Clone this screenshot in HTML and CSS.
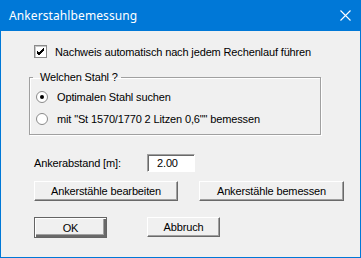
FILE: index.html
```html
<!DOCTYPE html>
<html lang="de">
<head>
    <meta charset="UTF-8">
    <title>Ankerstahlbemessung</title>
    <link rel="stylesheet" href="styles.css">
</head>
<body>
    <div class="window">
        <div class="titlebar">
            <span class="title">Ankerstahlbemessung</span>
            <svg class="close" width="11" height="11" viewBox="0 0 11 11">
                <path d="M0.5 0.5 L10.5 10.5 M10.5 0.5 L0.5 10.5" stroke="#fff" stroke-width="1.1" fill="none"/>
            </svg>
        </div>
        <div class="content">
            <label class="check-row">
                <span class="checkbox">
                    <svg width="9" height="9" viewBox="0 0 9 9">
                        <path d="M1 4 L3 6 L8 1 M1 5 L3 7 L8 2 M1 6 L3 8 L8 3" stroke="#000" stroke-width="1" fill="none"/>
                    </svg>
                </span>
                Nachweis automatisch nach jedem Rechenlauf führen
            </label>
            <fieldset class="group">
                <legend>Welchen Stahl ?</legend>
                <label class="radio-row"><span class="radio checked"></span>Optimalen Stahl suchen</label>
                <label class="radio-row"><span class="radio"></span>mit "St 1570/1770 2 Litzen 0,6"" bemessen</label>
            </fieldset>
            <div class="field-row">
                <span class="field-label">Ankerabstand [m]:</span>
                <span class="textbox">2.00</span>
            </div>
            <div class="button-row">
                <button class="btn wide">Ankerstähle bearbeiten</button>
                <button class="btn wide right">Ankerstähle bemessen</button>
            </div>
            <div class="button-row last">
                <button class="btn small default">OK</button>
                <button class="btn small abort">Abbruch</button>
            </div>
        </div>
    </div>
</body>
</html>
```

FILE: styles.css
```css
body {
    margin: 0;
    font-family: "Liberation Sans", Arial, sans-serif;
    font-size: 11px;
    letter-spacing: -0.14px;
    color: #000;
}
.window {
    width: 361px;
    height: 258px;
    box-sizing: border-box;
    background-color: #f0f0f0;
    border: 1px solid #0078d7;
    border-top: none;
}
.titlebar {
    height: 31px;
    margin: 0 -1px;
    background-color: #0078d7;
    display: flex;
    align-items: center;
    justify-content: space-between;
    padding: 0 10px 0 9px;
}
.title {
    color: #fff;
    font-family: "Noto Sans", sans-serif;
    font-size: 12px;
    letter-spacing: 0.1px;
    margin-top: -1px;
}
.close {
    display: block;
}
.content {
    padding-left: 33px;
}
.check-row {
    display: flex;
    align-items: center;
    height: 13px;
    margin-top: 14px;
}
.checkbox {
    width: 11px;
    height: 11px;
    border: 1px solid #8a8a8a;
    box-shadow: inset 1px 1px 0 #c8c8c8;
    background-color: #fff;
    margin-right: 8px;
    display: flex;
    align-items: center;
    justify-content: center;
}
.group {
    width: 285px;
    margin: 13px 0 0 -5px;
    padding: 5px 0 7px 5px;
    border: 1px solid #a0a0a0;
    box-shadow: inset 1px 1px 0 #fff, 1px 1px 0 #fff;
}
.group legend {
    padding: 0 3px 0 7px;
    margin-left: -2px;
    line-height: 13px;
}
.radio-row {
    display: flex;
    align-items: center;
    height: 16px;
    padding-left: 1px;
}
.radio-row + .radio-row {
    margin-top: 6px;
}
.radio {
    width: 10px;
    height: 10px;
    border-radius: 50%;
    border: 1px solid #8a8a8a;
    background-color: #fff;
    margin-right: 9px;
    position: relative;
}
.radio.checked::after {
    content: "";
    position: absolute;
    left: 3px;
    top: 3px;
    width: 4px;
    height: 4px;
    border-radius: 50%;
    background-color: #000;
}
.field-row {
    display: flex;
    align-items: center;
    margin-top: 19px;
}
.field-label {
    width: 113px;
}
.textbox {
    width: 37px;
    height: 16px;
    line-height: 16px;
    padding-left: 9px;
    background-color: #fff;
    border-top: 1px solid #a0a0a0;
    border-left: 1px solid #a0a0a0;
    border-bottom: 1px solid #fff;
    border-right: 1px solid #fff;
    box-shadow: inset 1px 1px 0 #696969;
}
.button-row {
    display: flex;
    margin-top: 9px;
}
.button-row.last {
    margin-top: 16px;
}
.btn {
    font-family: "Liberation Sans", Arial, sans-serif;
    font-size: 11px;
    letter-spacing: -0.14px;
    color: #000;
    background-color: #f0f0f0;
    height: 20px;
    padding: 0;
    border-top: 1px solid #fff;
    border-left: 1px solid #fff;
    border-bottom: 1px solid #696969;
    border-right: 1px solid #696969;
    box-shadow: inset -1px -1px 0 #a0a0a0;
}
.btn.wide {
    width: 144px;
}
.btn.right {
    width: 145px;
    margin-left: 21px;
}
.btn.small {
    width: 73px;
    height: 21px;
}
.btn.default {
    border: 1px solid #646464;
    box-shadow: inset 1px 1px 0 #fff, inset -2px -2px 0 #696969, inset -3px -3px 0 #a0a0a0;
}
.btn.abort {
    height: 20px;
    margin-left: 40px;
}
```
